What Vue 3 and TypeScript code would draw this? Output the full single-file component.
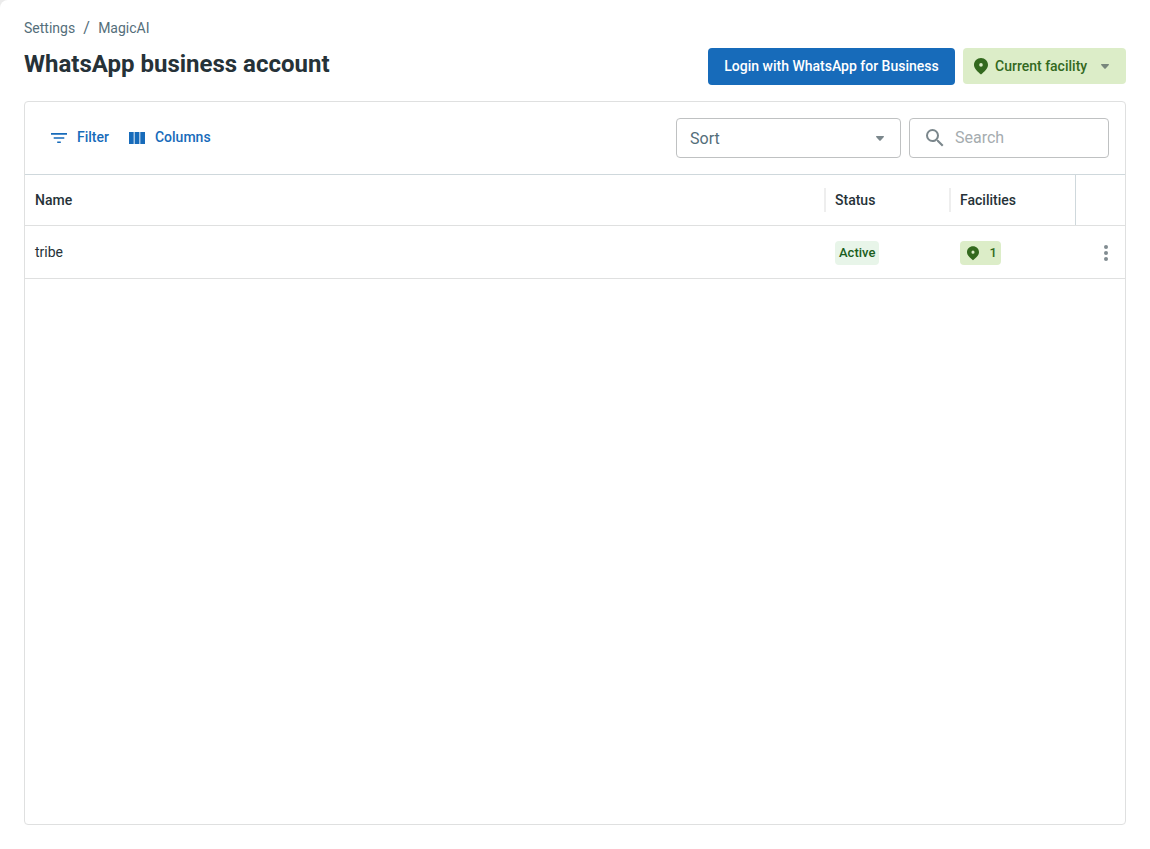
<script setup lang="ts">
interface Account {
  name: string
  status: string
  facilities: number
}

const pin = 'M7 0C3.1 0 0 3.05 0 6.9 0 10.6 3.6 13.4 7 16.4 10.4 13.4 14 10.6 14 6.9 14 3.05 10.9 0 7 0Zm0 5.1a1.8 1.8 0 1 1 0 3.6 1.8 1.8 0 0 1 0-3.6Z'

const accounts: Account[] = [{ name: 'tribe', status: 'Active', facilities: 1 }]
</script>

<template>
  <div class="backdrop">
    <main class="page">
      <nav class="crumbs"><span>Settings</span><span class="slash">/</span><span>MagicAI</span></nav>
      <header class="head">
        <h1>WhatsApp business account</h1>
        <div class="actions">
          <button class="login">Login with WhatsApp for Business</button>
          <button class="facility">
            <svg width="14" height="17" viewBox="0 0 14 17"><path :d="pin" fill="#33691e" fill-rule="evenodd" /></svg>
            <span>Current facility</span>
            <svg class="caret" width="8" height="5" viewBox="0 0 8 5"><path d="M.6 0h6.8q.9.1.4.9L4.7 4.4q-.7.7-1.4 0L.2.9Q-.3.1.6 0Z" fill="#78877c" /></svg>
          </button>
        </div>
      </header>

      <section class="panel">
        <div class="toolbar">
          <button class="tool filter">
            <svg width="16" height="11" viewBox="0 0 16 11"><path d="M0 0h16v1.7H0zM2.7 4.2h10.6v1.6H2.7zM6.2 8.4h3.6v1.6H6.2z" fill="#176bba" /></svg>
            <span>Filter</span>
          </button>
          <button class="tool columns">
            <svg width="16" height="12" viewBox="0 0 16 12"><path d="M0 0h4.7v12H0zM5.6 0h4.8v12H5.6zM11.3 0H16v12h-4.7z" fill="#176bba" /></svg>
            <span>Columns</span>
          </button>
          <div class="sort">
            <span>Sort</span>
            <svg width="8" height="5" viewBox="0 0 8 5"><path d="M.6 0h6.8q.9.1.4.9L4.7 4.4q-.7.7-1.4 0L.2.9Q-.3.1.6 0Z" fill="#7b878c" /></svg>
          </div>
          <div class="search">
            <svg width="24" height="24" viewBox="0 0 24 24"><path d="M15.5 14h-.79l-.28-.27A6.47 6.47 0 0 0 16 9.5 6.5 6.5 0 1 0 9.5 16c1.61 0 3.09-.59 4.23-1.57l.27.28v.79l5 4.99L20.49 19l-4.99-5zm-6 0C7.01 14 5 11.99 5 9.5S7.01 5 9.5 5 14 7.01 14 9.5 11.99 14 9.5 14z" fill="#7b878c" /></svg>
            <span>Search</span>
          </div>
        </div>

        <div class="row titles">
          <div class="cell">Name</div>
          <div class="cell split">Status</div>
          <div class="cell split">Facilities</div>
          <div class="cell last"></div>
        </div>
        <div v-for="a in accounts" :key="a.name" class="row entry">
          <div class="cell">{{ a.name }}</div>
          <div class="cell"><span class="chip active">{{ a.status }}</span></div>
          <div class="cell">
            <span class="chip count">
              <svg width="12" height="15" viewBox="0 0 14 17"><path :d="pin" fill="#33691e" fill-rule="evenodd" /></svg>
              <span>{{ a.facilities }}</span>
            </span>
          </div>
          <div class="cell menu">
            <svg width="4" height="16" viewBox="0 0 4 16" fill="#818c91"><circle cx="2" cy="2" r="2" /><circle cx="2" cy="8" r="2" /><circle cx="2" cy="14" r="2" /></svg>
          </div>
        </div>
      </section>
    </main>
  </div>
</template>

<style>
body { margin: 0; }
</style>

<style scoped>
.backdrop { height: 849px; background: #ebebeb; overflow: hidden; }
.page {
  box-sizing: border-box;
  height: 849px;
  padding: 18px 24px 24px;
  border-top-left-radius: 8px;
  background: #fff;
  color: #263238;
  font-family: Roboto, "Liberation Sans", sans-serif;
}
button { margin: 0; padding: 0; border: 0; background: none; font: inherit; white-space: nowrap; }
svg { display: block; flex: none; }
.crumbs { display: flex; height: 20px; font-size: 14px; line-height: 20px; color: #546e7a; }
.slash { width: 23px; text-align: center; font-size: 16px; }
.head { display: flex; justify-content: space-between; height: 63px; }
h1 { margin: 10px 0 0; font-size: 24px; line-height: 32px; font-weight: 700; white-space: nowrap; }
.actions { display: flex; align-items: flex-start; gap: 8px; padding-top: 10px; font-size: 14px; font-weight: 500; }
.login { width: 247px; height: 37px; padding-bottom: 1px; border-radius: 4px; background: #176bba; color: #fff; }
.facility { display: flex; align-items: center; box-sizing: border-box; width: 163px; height: 36px; padding: 0 17px 0 11px; border-radius: 4px; background: #dcedc8; color: #33691e; }
.facility span { margin-left: 7px; }
.caret { margin-left: auto; }
.panel { box-sizing: border-box; height: 724px; border: 1px solid #dfe0e0; border-radius: 4px; }
.toolbar { display: flex; align-items: center; box-sizing: border-box; height: 73px; padding: 0 16px 0 26px; border-bottom: 1px solid #cfd8dc; }
.tool { display: flex; align-items: center; height: 24px; color: #176bba; font-size: 14px; font-weight: 500; }
.tool span { margin-left: 10px; padding-bottom: 2px; line-height: 20px; }
.columns { margin-left: 20px; }
.sort, .search { display: flex; align-items: center; box-sizing: border-box; height: 40px; border: 1px solid #bfc1c2; border-radius: 4px; font-size: 16px; }
.sort { width: 225px; margin-left: auto; padding: 1px 16px 0 13px; justify-content: space-between; color: #546e7a; }
.search { width: 200px; margin-left: 8px; padding-left: 13px; color: #a5acaf; }
.search span { margin-left: 8px; line-height: 20px; }
.row { display: grid; grid-template-columns: 800px 125px 125px 50px; box-sizing: border-box; border-bottom: 1px solid #dfe0e0; font-size: 14px; }
.titles { height: 51px; font-weight: 500; }
.entry { height: 53px; }
.cell { display: flex; align-items: center; box-sizing: border-box; padding-left: 10px; }
.split { height: 24px; margin: 13px 0 0 -1px; padding-left: 9px; border-left: 2px solid #eeeeee; }
.last { border-left: 1px solid #cfd8dc; }
.chip { display: flex; align-items: center; box-sizing: border-box; height: 24px; padding: 0 4px; margin-top: 1px; border-radius: 4px; font-size: 13px; font-weight: 500; }
.active { background: #e8f5e9; color: #1b5e20; }
.count { width: 41px; padding-left: 7px; background: #dcedc8; color: #33691e; }
.count svg { margin-top: 1px; }
.count span { margin-left: auto; }
.menu { padding: 2px 0 0 29px; }
</style>
